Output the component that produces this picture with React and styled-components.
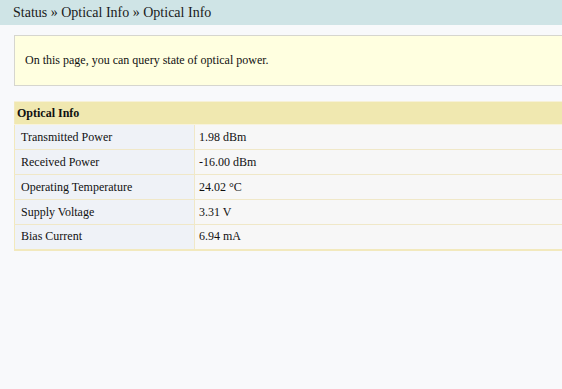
import React from "react";
import styled, { createGlobalStyle } from "styled-components";

const serif = `"Liberation Serif", "Times New Roman", Times, serif`;

const Global = createGlobalStyle`
  html, body { margin: 0; padding: 0; background: #f8f9fb; }
  body { font-family: ${serif}; color: #111; width: 562px; overflow: hidden; }
`;

const Page = styled.div`
  display: flex;
  flex-direction: column;
  width: 562px;
  min-height: 389px;
  background: #f8f9fb;
  font-family: ${serif};
`;

const Crumb = styled.div`
  height: 25px;
  line-height: 25px;
  background: #cfe4e6;
  font-family: ${serif};
  font-size: 14px;
  padding-left: 13px;
  color: #1a1a1a;
`;

const Content = styled.div`
  display: flex;
  flex-direction: column;
  padding: 10px 0 0 14px;
  gap: 15px;
`;

const Note = styled.div`
  border: 1px solid #d6d6cf;
  border-right: none;
  background: #ffffe0;
  height: 49px;
  display: flex;
  align-items: center;
  padding-left: 10px;
  font-family: ${serif};
  font-size: 12px;
`;

const Table = styled.table`
  border-collapse: collapse;
  width: 100%;
  font-family: ${serif};
  font-size: 12px;
  border-top: 1px solid #f7f1d8;
  border-bottom: 2px solid #f2e9bd;
  border-left: 1px solid #f2e9bd;
`;

const HeadCell = styled.th`
  background: #f0e8b0;
  text-align: left;
  font-weight: bold;
  font-family: ${serif};
  height: 22px;
  padding: 0 0 0 2px;
  border-bottom: 1px solid #f8f3dc;
`;

const Row = styled.tr`
  height: 25px;
  & + & td { border-top: 1px solid #f0e8c8; }
`;

const Label = styled.td`
  width: 173px;
  background: #eff2f7;
  font-family: ${serif};
  padding: 0 0 0 6px;
  border-right: 1px solid #f0e8c8;
`;

const Value = styled.td`
  background: #f7f7f7;
  font-family: ${serif};
  padding: 0 0 0 4px;
`;

const rows = [
  ["Transmitted Power", "1.98 dBm"],
  ["Received Power", "-16.00 dBm"],
  ["Operating Temperature", "24.02 °C"],
  ["Supply Voltage", "3.31 V"],
  ["Bias Current", "6.94 mA"],
];

export default function App() {
  return (
    <Page>
      <Global />
      <Crumb>Status » Optical Info » Optical Info</Crumb>
      <Content>
        <Note>On this page, you can query state of optical power.</Note>
        <Table>
          <thead>
            <tr>
              <HeadCell colSpan={2}>Optical Info</HeadCell>
            </tr>
          </thead>
          <tbody>
            {rows.map(([k, v]) => (
              <Row key={k}>
                <Label>{k}</Label>
                <Value>{v}</Value>
              </Row>
            ))}
          </tbody>
        </Table>
      </Content>
    </Page>
  );
}
